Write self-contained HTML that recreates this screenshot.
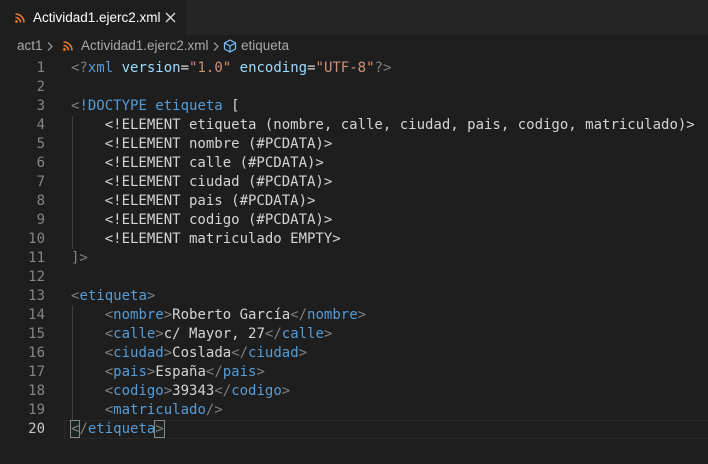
<!DOCTYPE html>
<html><head><meta charset="utf-8"><style>
body{margin:0;width:708px;height:464px;background:#1e1e1e;overflow:hidden;font-family:"Liberation Sans",sans-serif;}
svg{display:block}
.tabs{height:35px;background:#252526;position:relative}
.tab{position:absolute;left:0;top:0;width:186px;height:35px;background:#1e1e1e;color:#fff;font-size:13.5px;line-height:35px}
.tab .ic{position:absolute;left:15px;top:13px}
.tab .t{position:absolute;left:33px}
.tab .x{position:absolute;left:165px;top:12px}
.bc{height:22px;color:#a9a9a9;font-size:13.5px;line-height:22px;position:relative}
.bc span{position:absolute;top:0}
.ed{position:absolute;top:59px;left:0;right:0;font-family:"DejaVu Sans Mono",monospace;font-size:14px}
.l{height:19px;line-height:19px;position:relative;white-space:pre}
.n{position:absolute;right:663px;color:#858585;text-align:right}
.c{position:absolute;left:71px;color:#d4d4d4}
.g{color:#808080}.b{color:#569cd6}.a{color:#9cdcfe}.s{color:#ce9178}
.guide{position:absolute;left:72px;width:1px;background:#404040}
.cur{position:absolute;left:64px;right:0;top:361px;height:17px;border:1px solid #282828;border-right:none}
.bm{outline:1px solid #888;background:#1e3a2a33}
</style></head><body>
<div class="tabs"><div class="tab"><span class="ic"><svg width="10" height="10" viewBox="0 0 10 10"><circle cx="1.5" cy="8.5" r="1.4" fill="#e37933"/><path d="M0.5 4.5a5 5 0 0 1 5 5M0.5 1a8.5 8.5 0 0 1 8.5 8.5" fill="none" stroke="#e37933" stroke-width="1.6"/></svg></span><span class="t">Actividad1.ejerc2.xml</span><span class="x"><svg width="11" height="11" viewBox="0 0 11 11"><path d="M1 1l9 9M10 1l-9 9" stroke="#ddd" stroke-width="1.3"/></svg></span></div></div>
<div class="bc"><span style="left:17px">act1</span><span style="left:47px;top:7px"><svg width="6" height="9" viewBox="0 0 6 9"><path d="M1 0.5l4 4-4 4" fill="none" stroke="#a9a9a9" stroke-width="1.1"/></svg></span><span style="left:63px;top:6px"><svg width="10" height="10" viewBox="0 0 10 10"><circle cx="1.5" cy="8.5" r="1.4" fill="#e37933"/><path d="M0.5 4.5a5 5 0 0 1 5 5M0.5 1a8.5 8.5 0 0 1 8.5 8.5" fill="none" stroke="#e37933" stroke-width="1.6"/></svg></span><span style="left:81px">Actividad1.ejerc2.xml</span><span style="left:213px;top:7px"><svg width="6" height="9" viewBox="0 0 6 9"><path d="M1 0.5l4 4-4 4" fill="none" stroke="#a9a9a9" stroke-width="1.1"/></svg></span><span style="left:222px;top:3px"><svg width="16" height="16" viewBox="0 0 16 16"><path d="M8 2l5.5 3v6L8 14 2.5 11V5z M2.5 5L8 8l5.5-3 M8 8v6" fill="none" stroke="#75beff" stroke-width="1.2"/></svg></span><span style="left:241px">etiqueta</span></div>
<div class="ed">
<div class="cur"></div>
<div class="guide" style="top:57px;height:133px"></div>
<div class="guide" style="top:247px;height:114px"></div>
<div class="l"><span class="n">1</span><span class="c"><span class="g">&lt;?</span><span class="b">xml</span> <span class="a">version</span>=<span class="s">"1.0"</span> <span class="a">encoding</span>=<span class="s">"UTF-8"</span><span class="g">?&gt;</span></span></div>
<div class="l"><span class="n">2</span></div>
<div class="l"><span class="n">3</span><span class="c"><span class="g">&lt;</span><span class="b">!DOCTYPE etiqueta</span> [</span></div>
<div class="l"><span class="n">4</span><span class="c">    &lt;!ELEMENT etiqueta (nombre, calle, ciudad, pais, codigo, matriculado)&gt;</span></div>
<div class="l"><span class="n">5</span><span class="c">    &lt;!ELEMENT nombre (#PCDATA)&gt;</span></div>
<div class="l"><span class="n">6</span><span class="c">    &lt;!ELEMENT calle (#PCDATA)&gt;</span></div>
<div class="l"><span class="n">7</span><span class="c">    &lt;!ELEMENT ciudad (#PCDATA)&gt;</span></div>
<div class="l"><span class="n">8</span><span class="c">    &lt;!ELEMENT pais (#PCDATA)&gt;</span></div>
<div class="l"><span class="n">9</span><span class="c">    &lt;!ELEMENT codigo (#PCDATA)&gt;</span></div>
<div class="l"><span class="n">10</span><span class="c">    &lt;!ELEMENT matriculado EMPTY&gt;</span></div>
<div class="l"><span class="n">11</span><span class="c"><span class="g">]&gt;</span></span></div>
<div class="l"><span class="n">12</span></div>
<div class="l"><span class="n">13</span><span class="c"><span class="g">&lt;</span><span class="b">etiqueta</span><span class="g">&gt;</span></span></div>
<div class="l"><span class="n">14</span><span class="c">    <span class="g">&lt;</span><span class="b">nombre</span><span class="g">&gt;</span>Roberto García<span class="g">&lt;/</span><span class="b">nombre</span><span class="g">&gt;</span></span></div>
<div class="l"><span class="n">15</span><span class="c">    <span class="g">&lt;</span><span class="b">calle</span><span class="g">&gt;</span>c/ Mayor, 27<span class="g">&lt;/</span><span class="b">calle</span><span class="g">&gt;</span></span></div>
<div class="l"><span class="n">16</span><span class="c">    <span class="g">&lt;</span><span class="b">ciudad</span><span class="g">&gt;</span>Coslada<span class="g">&lt;/</span><span class="b">ciudad</span><span class="g">&gt;</span></span></div>
<div class="l"><span class="n">17</span><span class="c">    <span class="g">&lt;</span><span class="b">pais</span><span class="g">&gt;</span>España<span class="g">&lt;/</span><span class="b">pais</span><span class="g">&gt;</span></span></div>
<div class="l"><span class="n">18</span><span class="c">    <span class="g">&lt;</span><span class="b">codigo</span><span class="g">&gt;</span>39343<span class="g">&lt;/</span><span class="b">codigo</span><span class="g">&gt;</span></span></div>
<div class="l"><span class="n">19</span><span class="c">    <span class="g">&lt;</span><span class="b">matriculado</span><span class="g">/&gt;</span></span></div>
<div class="l"><span class="n" style="color:#c6c6c6">20</span><span class="c"><span class="g bm">&lt;</span><span class="g">/</span><span class="b">etiqueta</span><span class="g bm">&gt;</span></span></div>
</div>
</body></html>
